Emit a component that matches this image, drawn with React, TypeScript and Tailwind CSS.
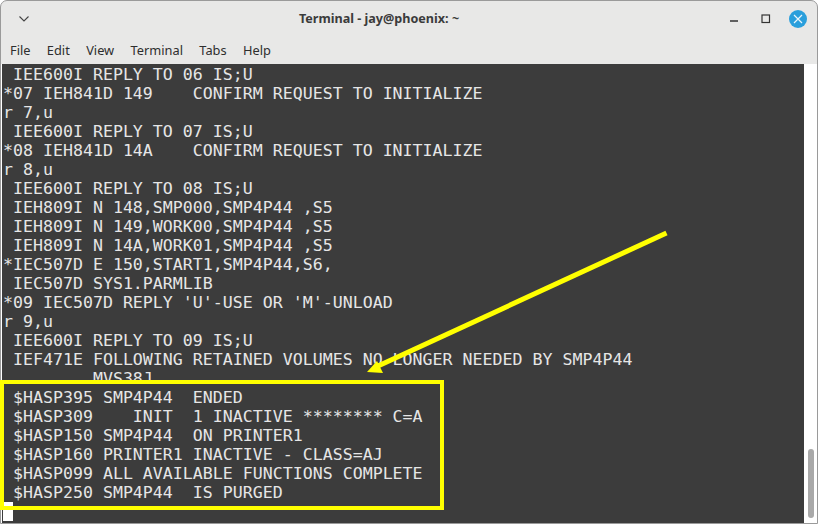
const lines = [
" IEE600I REPLY TO 06 IS;U",
"*07 IEH841D 149    CONFIRM REQUEST TO INITIALIZE",
"r 7,u",
" IEE600I REPLY TO 07 IS;U",
"*08 IEH841D 14A    CONFIRM REQUEST TO INITIALIZE",
"r 8,u",
" IEE600I REPLY TO 08 IS;U",
" IEH809I N 148,SMP000,SMP4P44 ,S5",
" IEH809I N 149,WORK00,SMP4P44 ,S5",
" IEH809I N 14A,WORK01,SMP4P44 ,S5",
"*IEC507D E 150,START1,SMP4P44,S6,",
" IEC507D SYS1.PARMLIB",
"*09 IEC507D REPLY 'U'-USE OR 'M'-UNLOAD",
"r 9,u",
" IEE600I REPLY TO 09 IS;U",
" IEF471E FOLLOWING RETAINED VOLUMES NO LONGER NEEDED BY SMP4P44",
"         MVS38J.",
" $HASP395 SMP4P44  ENDED",
" $HASP309    INIT  1 INACTIVE ******** C=A",
" $HASP150 SMP4P44  ON PRINTER1",
" $HASP160 PRINTER1 INACTIVE - CLASS=AJ",
" $HASP099 ALL AVAILABLE FUNCTIONS COMPLETE",
" $HASP250 SMP4P44  IS PURGED",
];

export default function App() {
  return (
    <div className="relative w-[818px] h-[524px] overflow-hidden bg-white font-['Noto_Sans',sans-serif]">
      <div className="flex flex-col h-full rounded-t-[7px] border border-[#9a9a9a] bg-[#e8e8e7]">
        <div className="relative flex items-center justify-between h-[36px] shrink-0 pl-[18px] pr-[10px]">
          <svg width="10" height="6" viewBox="0 0 10 6" fill="none" stroke="#444" strokeWidth="1.1"><path d="M0.5 0.5 L5 5 L9.5 0.5" /></svg>
          <span className="absolute left-0 w-[756px] text-center text-[12.6px] font-bold text-[#3b3b3b] leading-none">Terminal - jay@phoenix: ~</span>
          <div className="flex items-center">
            <svg width="10" height="4" viewBox="0 0 10 4" className="mr-[22px] mt-[4px]"><path d="M1 2 H9" stroke="#333" strokeWidth="1.5" /></svg>
            <svg width="10" height="10" viewBox="0 0 10 10" className="mr-[18px]"><rect x="1" y="1" width="7.5" height="7.5" fill="none" stroke="#333" strokeWidth="1.2" /></svg>
            <div className="flex items-center justify-center w-[18px] h-[18px] rounded-full bg-[#2a9fdc]">
              <svg width="10" height="10" viewBox="0 0 10 10"><path d="M1 1 L9 9 M9 1 L1 9" stroke="#eaf6fc" strokeWidth="1.2" /></svg>
            </div>
          </div>
        </div>
        <div className="flex items-center h-[27px] shrink-0 pl-[9px] gap-[16.4px] text-[12.8px] text-[#2e2e2e]">
          <span>File</span><span>Edit</span><span>View</span><span>Terminal</span><span>Tabs</span><span>Help</span>
        </div>
        <div className="flex flex-1 min-h-0 pl-px bg-white">
          <div className="flex-1 bg-[#3c3c3c] pl-[1px] pt-[1px] overflow-hidden font-['DejaVu_Sans_Mono',monospace] text-[16.6px] leading-[19px] text-[#e6e6e6] whitespace-pre">
            {lines.map((l, i) => <div key={i} className="h-[19px]">{l}</div>)}
            <div className="w-[10px] h-[19px] bg-white" />
          </div>
          <div className="flex justify-center w-[13px] bg-white pt-[385px] pb-[5px] shrink-0">
            <div className="w-[6px] h-[69px] rounded-full bg-[#a9a9a9]" />
          </div>
        </div>
      </div>
      <div className="absolute left-0 top-[380px] w-[444px] h-[130px] border-4 border-[#ffff00]" />
      <svg className="absolute left-0 top-0 pointer-events-none" width="818" height="524" viewBox="0 0 818 524">
        <path d="M666.5 233 L378 366" stroke="#ffff00" strokeWidth="5" fill="none" />
        <path d="M367 372 L377 361 L383 373 Z" fill="#ffff00" />
      </svg>
    </div>
  );
}
